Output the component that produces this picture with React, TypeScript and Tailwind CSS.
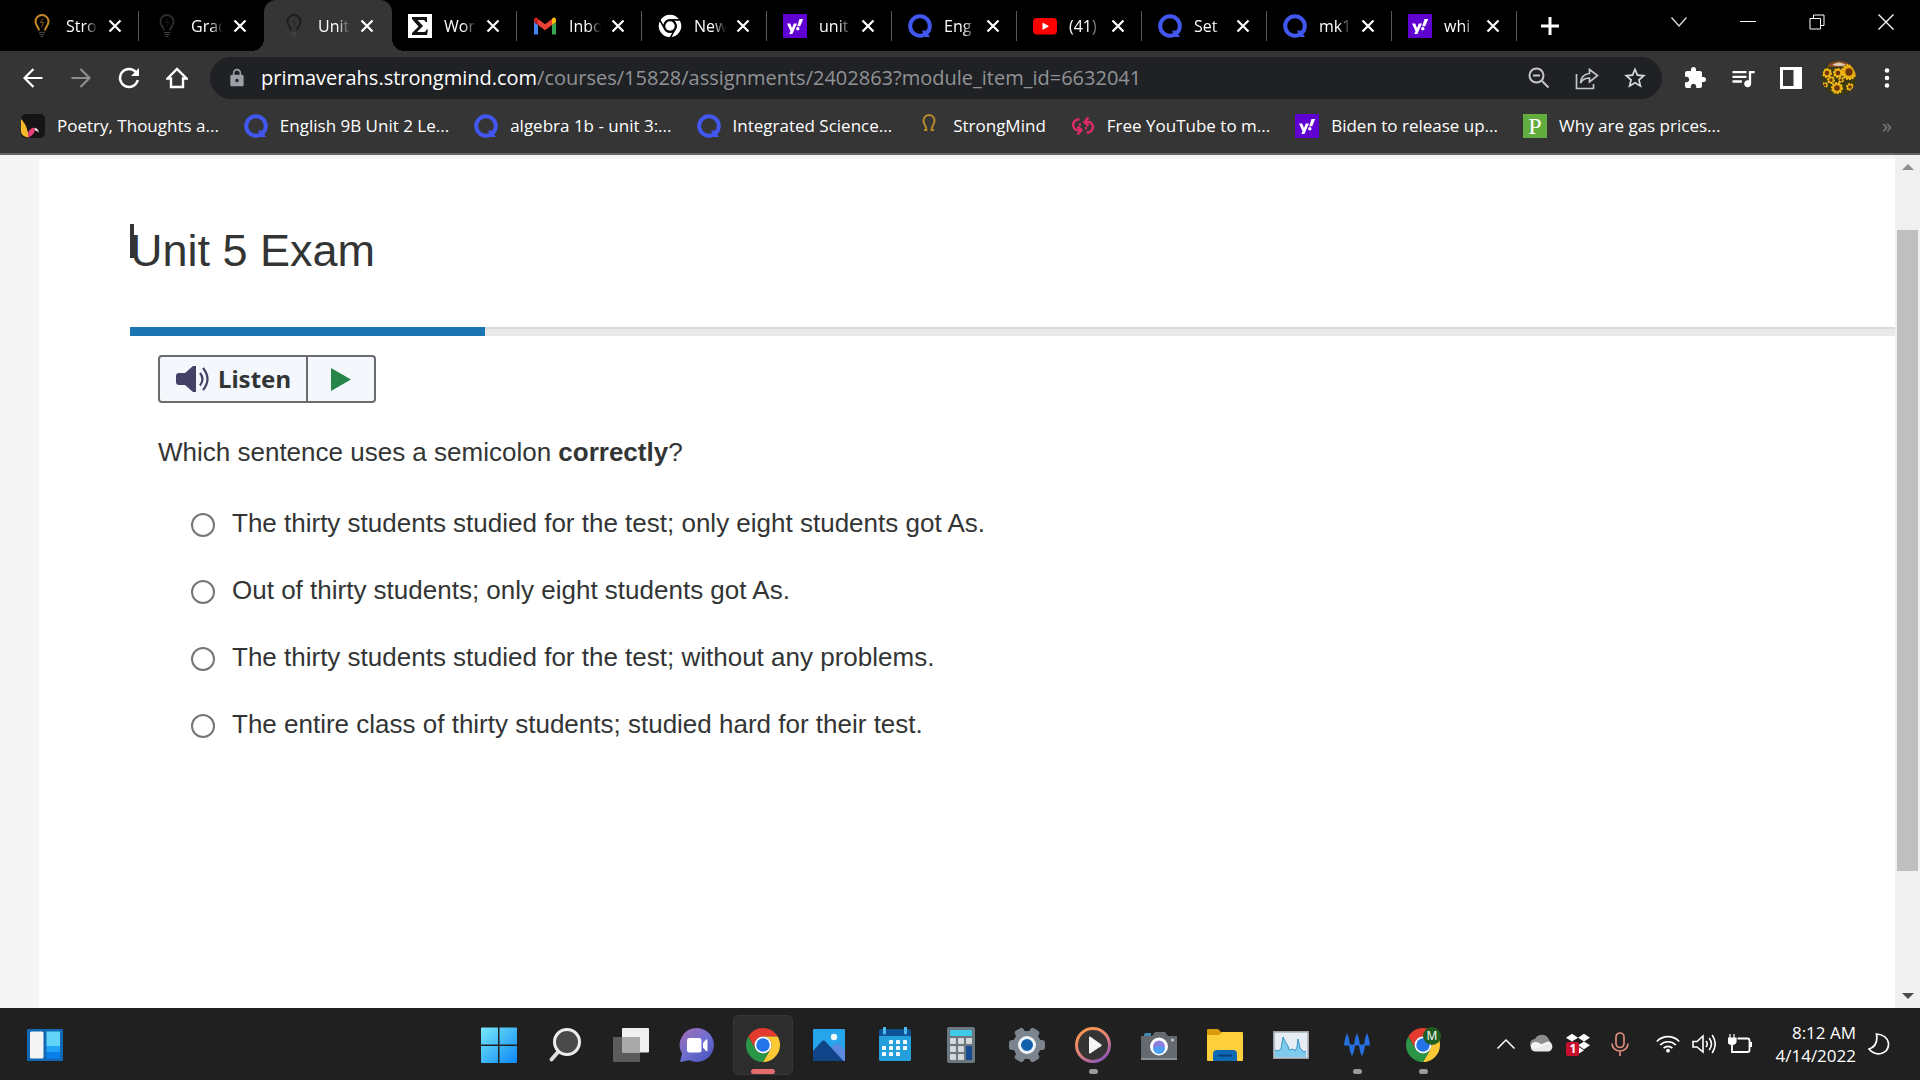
import { useState, type ReactNode } from 'react'
import { FaDropbox } from 'react-icons/fa'
import { MdExtension, MdStarBorder, MdLock, MdQueueMusic } from 'react-icons/md'

type IconProps = { className?: string }

/* ---------- favicons ---------- */

function Bulb({ className = 'text-[#c98a25]' }: IconProps) {
  return (
    <svg viewBox="0 0 24 24" className={`size-6 ${className}`} fill="none" stroke="currentColor">
      <path d="M9 16.5C9 13 5.5 12 5.5 7.5a6.5 6.5 0 0 1 13 0C18.500 12 15 13 15 16.500" strokeWidth="2" />
      <path d="M13 4.500l-2.500 4h3L11.500 13" strokeWidth="1" opacity=".6" />
      <path d="M9 18.500h6M9.500 20.500h5M10.500 22.500h3" stroke="#444" strokeWidth="1.200" />
    </svg>
  )
}

function Horseshoe() {
  return (
    <svg viewBox="0 0 24 24" className="size-6" fill="none" stroke="#b98a2c" strokeWidth="2">
      <path d="M7 16h2.500C9.500 11.500 6.500 11 6.500 6.500a5.500 5.500 0 0 1 11 0c0 4.500-3 5-3 9.500H17" />
    </svg>
  )
}

function Quizlet() {
  return (
    <svg viewBox="0 0 24 24" className="size-6" fill="none" stroke="#4257f0" strokeWidth="4">
      <circle cx="12" cy="12" r="9.800" />
      <path d="M14 16.500h3.500l4.500 6.500h-5z" fill="#4257f0" stroke="none" />
    </svg>
  )
}

function Yahoo() {
  return (
    <svg viewBox="0 0 24 24" className="size-6">
      <rect width="24" height="24" fill="#5f01d1" />
      <path d="M4 9.500h3.200l1.800 4.500 1.800-4.500H14L9.400 20H6.300l1.200-2.800z" fill="#fff" />
      <path d="M16.500 5h3.700l-3 7.200h-3z" fill="#fff" />
      <circle cx="14.800" cy="14.800" r="1.700" fill="#fff" />
    </svg>
  )
}

function Sigma() {
  return (
    <svg viewBox="0 0 24 24" className="size-6">
      <rect width="24" height="24" fill="#fff" />
      <path d="M4 3h15v5h-1.500c-.5-1.500-1-2-3-2H9.500l5.500 6-6 6h6c2 0 3-.5 3.500-2.500H20L19 21H4v-2l6.500-6.500L4 5z" fill="#111" />
    </svg>
  )
}

function Gmail() {
  return (
    <svg viewBox="0 0 24 24" className="size-6">
      <path d="M1 20.500h4V11L1 8z" fill="#4285f4" />
      <path d="M19 20.500h4V8l-4 3z" fill="#34a853" />
      <path d="M19 5v6l4-3V6c0-2.500-2.500-3.500-4-1z" fill="#fbbc04" />
      <path d="M5 11V5l7 5.200L19 5v6l-7 5.200z" fill="#ea4335" />
      <path d="M1 8l4 3V5C3.500 2.500 1 3.500 1 6z" fill="#c5221f" />
    </svg>
  )
}

function YouTube() {
  return (
    <svg viewBox="0 0 24 24" className="size-6">
      <rect y="4" width="24" height="16.500" rx="4" fill="#f00" />
      <path d="M9.500 8.500v7.500l6.500-3.700z" fill="#fff" />
    </svg>
  )
}

function ChromeLogo({ className = 'size-6', mono = false }: IconProps & { mono?: boolean }) {
  const line = mono ? '#000' : 'none'
  return (
    <svg viewBox="0 0 48 48" className={className} stroke={line} strokeWidth={mono ? 3 : 0}>
      <path d="M24 12H44.780a24 24 0 0 0-41.560 0L13.610 30A12 12 0 0 1 24 12Z" fill={mono ? '#fff' : '#e33b2e'} />
      <path d="M34.390 30 24 48A24 24 0 0 0 44.780 12H24A12 12 0 0 1 34.390 30Z" fill={mono ? '#fff' : '#fcc934'} />
      <path d="M13.610 30 3.220 12A24 24 0 0 0 24 48L34.390 30a12 12 0 0 1-20.780 0Z" fill={mono ? '#fff' : '#2a9447'} />
      <circle cx="24" cy="24" r="12" fill={mono ? '#000' : '#fff'} />
      <circle cx="24" cy="24" r="9.500" fill={mono ? '#fff' : '#2374e8'} stroke="none" />
    </svg>
  )
}

function Poetry() {
  return (
    <svg viewBox="0 0 24 24" className="size-6">
      <rect width="24" height="24" rx="5" fill="#171417" />
      <path d="M0 5c4 4 7 10 7.500 18.500C3 23 0 20.500 0 17z" fill="#f8b928" />
      <path d="M7.500 23.500C6 19 8 14 13.500 13.500c1.500 3-1 8-6 10z" fill="#e8407a" />
      <path d="M13.500 14c2.500-.5 4 2 4.500 5-1-1.500-2-2-3.500-2.200z" fill="#eee" />
    </svg>
  )
}

function Mp3Loop() {
  return (
    <svg viewBox="0 0 24 24" className="size-6" fill="none" stroke="#dc2b68" strokeWidth="2.500">
      <path d="M8.500 5.500A5.500 5.500 0 0 0 5.500 16H10" />
      <path d="M6.500 20.500l4-4.500-4-3.500M15.500 18.500a5.500 5.500 0 0 0 3-10.500H14M17.500 12L13.500 8l4-4.500" />
      <path d="M8 10.500h2M14 14h2" />
    </svg>
  )
}

function PbsP() {
  return (
    <span className="flex size-6 items-center justify-center bg-[#62ad3e] font-['Liberation_Serif',serif] text-2xl leading-6 text-white">
      P
    </span>
  )
}

/* ---------- taskbar icons ---------- */

function Widgets() {
  return (
    <svg viewBox="0 0 36 36" className="size-9">
      <rect y="2" width="36" height="32" rx="1" fill="#1268b3" />
      <rect x="3" y="4.500" width="13.500" height="27" rx="1.500" fill="#f4f4f4" />
      <path d="M19.500 4.500H33V19H19.500z" fill="#62d4fa" />
      <path d="M19.500 19H33v6H19.500z" fill="#20a4f3" />
      <path d="M19.500 25H33v6.500H19.500z" fill="#0a80ea" />
    </svg>
  )
}

function Start() {
  return (
    <svg viewBox="0 0 36 36" className="size-9">
      <defs>
        <linearGradient id="start" x1="0" y1="0" x2="36" y2="36" gradientUnits="userSpaceOnUse">
          <stop stopColor="#79eafb" />
          <stop offset="1" stopColor="#0a87f5" />
        </linearGradient>
      </defs>
      <path d="M0 1.500Q0 .5 1 .5h16v17H0zM18.500.5H35q1 0 1 1v16H18.500zM0 19h17v17H1q-1 0-1-1zM18.500 19H36v16q0 1-1 1H18.500z" fill="url(#start)" />
    </svg>
  )
}

function Search() {
  return (
    <svg viewBox="0 0 36 36" className="size-9">
      <path d="M11 25 4.500 32.500" stroke="#dcdcdc" strokeWidth="4" strokeLinecap="round" />
      <circle cx="20" cy="15" r="12.500" fill="#4a4a4a" stroke="#eee" strokeWidth="3" />
    </svg>
  )
}

function TaskView() {
  return (
    <svg viewBox="0 0 36 36" className="size-9">
      <rect y="10" width="27" height="25" rx="1" fill="#5b5b5b" />
      <rect x="9" y="1" width="27" height="24.500" rx="1" fill="#f0f0f0" />
      <rect x="9" y="10" width="18" height="15.500" fill="#a9a9a9" />
    </svg>
  )
}

function Chat() {
  return (
    <svg viewBox="0 0 36 36" className="size-9">
      <defs>
        <linearGradient id="chat" x1="5" y1="4" x2="30" y2="34" gradientUnits="userSpaceOnUse">
          <stop stopColor="#9c6cba" />
          <stop offset=".5" stopColor="#6d6fd0" />
          <stop offset="1" stopColor="#4b53bc" />
        </linearGradient>
      </defs>
      <path d="M18 1a17 17 0 1 1-7.500 32.300L1 35l2-8.500A17 17 0 0 1 18 1z" fill="url(#chat)" />
      <rect x="8" y="11" width="14.500" height="14.500" rx="2.500" fill="#fff" />
      <path d="M24 16l3-3.500h1.500v11.500H27l-3-3.500z" fill="#fff" />
    </svg>
  )
}

function Photos() {
  return (
    <svg viewBox="0 0 36 36" className="size-9">
      <rect x="2" y="2" width="32" height="32" rx="1" fill="#27a5ea" />
      <path d="M18 23l6.500-6q1.500-1 3 0l6.500 6v11H18z" fill="#5b8ae0" />
      <path d="M2 24l9-10q1.500-1.500 3 0l18.500 20H2z" fill="#104488" />
      <circle cx="23" cy="10" r="3.200" fill="#f0fafa" />
    </svg>
  )
}

function Calendar() {
  const dots = [[12, 13], [19, 13], [26, 13], [5, 19], [12, 19], [19, 19], [26, 19], [5, 25], [12, 25], [19, 25]]
  return (
    <svg viewBox="0 0 36 36" className="size-9">
      <rect x="2" y="8" width="32" height="26" rx="1.500" fill="#259fdc" />
      <path d="M2 4q0-2 2-2h28q2 0 2 2v5H2z" fill="#0e5296" />
      <path d="M7.500 1v5M28.500 1v5" stroke="#50bdf0" strokeWidth="3" strokeLinecap="round" />
      {dots.map(([x, y]) => (
        <rect key={`${x}-${y}`} x={x} y={y} width="4" height="4" rx=".5" fill="#f2faff" />
      ))}
    </svg>
  )
}

function Calculator() {
  const keys = [[7, 12], [15, 12], [23, 12], [7, 20], [15, 20], [7, 28], [15, 28]]
  return (
    <svg viewBox="0 0 36 36" className="size-9">
      <rect x="4" width="28" height="36" rx="2" fill="#6d7780" />
      <rect x="7" y="3" width="22" height="6" rx="1" fill="#3fc9e8" />
      {keys.map(([x, y]) => (
        <rect key={`${x}-${y}`} x={x} y={y - 1} width="6" height="6" rx="1" fill="#d4d8da" />
      ))}
      <rect x="23" y="19" width="6" height="14" rx="1" fill="#154c91" />
    </svg>
  )
}

function Gear() {
  return (
    <svg viewBox="0 0 36 36" className="size-9">
      <g fill="#7c858d">
        <circle cx="18" cy="18" r="14" />
        {[0, 60, 120].map(a => (
          <rect key={a} x="0" y="13" width="36" height="10" rx="3" transform={`rotate(${a} 18 18)`} />
        ))}
      </g>
      <circle cx="18" cy="18" r="7.500" fill="#1560ad" stroke="#edf5fa" strokeWidth="3" />
    </svg>
  )
}

function MediaPlayer() {
  return (
    <svg viewBox="0 0 36 36" className="size-9">
      <defs>
        <linearGradient id="media" x1="8" y1="2" x2="28" y2="34" gradientUnits="userSpaceOnUse">
          <stop stopColor="#f8944a" />
          <stop offset=".5" stopColor="#e58279" />
          <stop offset="1" stopColor="#8a55b5" />
        </linearGradient>
      </defs>
      <circle cx="18" cy="18" r="16.500" fill="#343434" stroke="url(#media)" strokeWidth="3" />
      <path d="M14 10.500v15q0 1.500 1.500.7l10.500-7q1.200-1 0-2l-10.500-7.400Q14 9.200 14 10.500z" fill="#f4f4f4" />
    </svg>
  )
}

function Camera() {
  return (
    <svg viewBox="0 0 36 36" className="size-9">
      <path d="M3 8q0-2 2-2h5v4H3z" fill="#3f8ab0" />
      <path d="M0 9h11l3-4h10l3 4h9v24H0z" fill="#646a70" />
      <path d="M0 31h36v2H0z" fill="#8a8f94" />
      <circle cx="31.500" cy="13" r="1.500" fill="#c8ccce" />
      <circle cx="18" cy="19.500" r="7.500" fill="#8f80e0" stroke="#fff" strokeWidth="3" />
      <path d="M12 21a6 6 0 0 0 12 0q-6-4-12 0z" fill="#4d9df0" />
    </svg>
  )
}

function Explorer() {
  return (
    <svg viewBox="0 0 36 36" className="size-9">
      <path d="M0 3q0-1 1-1h10l4 4-3 4H0z" fill="#d99a0b" />
      <path d="M0 8h12l3-3h20q1 0 1 1v27q0 1-1 1H1q-1 0-1-1z" fill="#fdd03b" />
      <path d="M6 34V27q0-4 4-4h16q4 0 4 4v7z" fill="#0e69b5" />
      <path d="M11 28.500h14" stroke="#073f78" strokeWidth="2" />
    </svg>
  )
}

function Monitor() {
  return (
    <svg viewBox="0 0 36 36" className="size-9">
      <rect x=".8" y="4.800" width="34.400" height="26.400" fill="#e6edf3" stroke="#9aa3ab" strokeWidth="1.600" />
      <path d="M2 23l3 1 3-2 2-12 3 6 2 3 1 4 4-1 2 2 2-4 1-8 2 9 4 4 2-1v6H2z" fill="#7fcbee" />
      <path d="M2 23l3 1 3-2 2-12 3 6 2 3 1 4 4-1 2 2 2-4 1-8 2 9 4 4 2-1" fill="none" stroke="#3a93c8" />
    </svg>
  )
}

function Wave() {
  return (
    <svg viewBox="0 0 36 36" className="size-9" fill="#256fe0">
      <path d="M5 18.500Q6 10 8 6q2 4 3 12.500zM15 18.500Q16 10 18 6q2 4 3 12.500zM25 18.500Q26 10 28 6q2 4 3 12.500z" />
      <path d="M10 17.500h6Q15.500 25 13 29q-2.500-4-3-11.500zM20 17.500h6Q25.500 25 23 29q-2.500-4-3-11.500z" />
    </svg>
  )
}

/* ---------- data ---------- */

const tabs: { label: string; icon: ReactNode; active?: boolean; divider?: boolean }[] = [
  { label: 'Stro', icon: <Bulb />, divider: true },
  { label: 'Grad', icon: <Bulb className="text-[#2c2c2c]" /> },
  { label: 'Unit', icon: <Bulb className="text-[#1d1d1d]" />, active: true },
  { label: 'Wor', icon: <Sigma />, divider: true },
  { label: 'Inbo', icon: <Gmail />, divider: true },
  { label: 'New', icon: <ChromeLogo mono />, divider: true },
  { label: 'unit', icon: <Yahoo />, divider: true },
  { label: 'Eng', icon: <Quizlet />, divider: true },
  { label: '(41)', icon: <YouTube />, divider: true },
  { label: 'Set', icon: <Quizlet />, divider: true },
  { label: 'mk1', icon: <Quizlet />, divider: true },
  { label: 'whi', icon: <Yahoo />, divider: true },
]

const bookmarks = [
  { label: 'Poetry, Thoughts a...', icon: <Poetry /> },
  { label: 'English 9B Unit 2 Le...', icon: <Quizlet /> },
  { label: 'algebra 1b - unit 3:...', icon: <Quizlet /> },
  { label: 'Integrated Science...', icon: <Quizlet /> },
  { label: 'StrongMind', icon: <Horseshoe /> },
  { label: 'Free YouTube to m...', icon: <Mp3Loop /> },
  { label: 'Biden to release up...', icon: <Yahoo /> },
  { label: 'Why are gas prices...', icon: <PbsP /> },
]

const answers = [
  'The thirty students studied for the test; only eight students got As.',
  'Out of thirty students; only eight students got As.',
  'The thirty students studied for the test; without any problems.',
  'The entire class of thirty students; studied hard for their test.',
]

const apps: { name: string; icon: ReactNode; active?: boolean; running?: boolean }[] = [
  { name: 'Start', icon: <Start /> },
  { name: 'Search', icon: <Search /> },
  { name: 'Task View', icon: <TaskView /> },
  { name: 'Chat', icon: <Chat /> },
  { name: 'Chrome', icon: <ChromeLogo className="size-[34px]" />, active: true },
  { name: 'Photos', icon: <Photos /> },
  { name: 'Calendar', icon: <Calendar /> },
  { name: 'Calculator', icon: <Calculator /> },
  { name: 'Settings', icon: <Gear /> },
  { name: 'Media Player', icon: <MediaPlayer />, running: true },
  { name: 'Camera', icon: <Camera /> },
  { name: 'File Explorer', icon: <Explorer /> },
  { name: 'Resource Monitor', icon: <Monitor /> },
  { name: 'Wave', icon: <Wave />, running: true },
  {
    name: 'Chrome profile',
    running: true,
    icon: (
      <span className="relative">
        <ChromeLogo className="size-[34px]" />
        <span className="absolute -top-px -right-px flex size-[18px] items-center justify-center rounded-full bg-[#1f5f22] text-xs text-white">
          M
        </span>
      </span>
    ),
  },
]

/* ---------- browser chrome ---------- */

function IconButton({ label, children }: { label: string; children: ReactNode }) {
  return (
    <button aria-label={label} className="flex w-12 shrink-0 items-center justify-center text-white">
      {children}
    </button>
  )
}

function TabStrip() {
  return (
    <div className="flex h-[51px] bg-black pl-3.5 text-white">
      <div className="flex">
        {tabs.map((tab, i) => (
          <div
            key={i}
            className={
              tab.active
                ? 'relative flex w-32 items-center rounded-t-xl bg-[#353535] pl-[18px]'
                : 'relative flex w-[125px] items-center pl-4'
            }
          >
            {tab.icon}
            <span className="ml-3 w-8 whitespace-nowrap text-base [mask-image:linear-gradient(to_right,black_60%,transparent)]">
              {tab.label}
            </span>
            <button aria-label={`Close ${tab.label}`} className="ml-2.5">
              <svg viewBox="0 0 14 14" className="size-3.5" stroke="#fff" strokeWidth="2.200">
                <path d="M1.500 1.500l11 11M12.500 1.500l-11 11" />
              </svg>
            </button>
            {tab.divider && <span className="absolute right-0 h-[30px] w-px bg-[#5a5a5a]" />}
            {tab.active && (
              <>
                <span className="absolute bottom-0 -left-3 size-3 bg-[radial-gradient(circle_at_0_0,black_12px,#353535_12px)]" />
                <span className="absolute bottom-0 -right-3 size-3 bg-[radial-gradient(circle_at_100%_0,black_12px,#353535_12px)]" />
              </>
            )}
          </div>
        ))}
      </div>
      <button aria-label="New tab" className="ml-6 flex items-center">
        <svg viewBox="0 0 18 18" className="size-[18px]" stroke="#fff" strokeWidth="3">
          <path d="M9 0v18M0 9h18" />
        </svg>
      </button>
      <div className="ml-auto flex h-[43px]">
        <button aria-label="Search tabs" className="flex w-[69px] items-center justify-center">
          <svg viewBox="0 0 18 10" className="h-2.5 w-[18px]" fill="none" stroke="#ddd" strokeWidth="1.300">
            <path d="M1.500 .5L9 9l7.500-8.500" />
          </svg>
        </button>
        <button aria-label="Minimize" className="flex w-[69px] items-center justify-center">
          <span className="h-px w-4 bg-white" />
        </button>
        <button aria-label="Restore" className="flex w-[69px] items-center justify-center">
          <svg viewBox="0 0 16 16" className="size-4" fill="none" stroke="#fff">
            <path d="M1 4.500h10.500V15H1zM4.500 4V1H15v10.500h-3" />
          </svg>
        </button>
        <button aria-label="Close window" className="flex w-[69px] items-center justify-center">
          <svg viewBox="0 0 16 16" className="size-4" stroke="#fff" strokeWidth="1.300">
            <path d="M.5.5l15 15M15.500.5l-15 15" />
          </svg>
        </button>
      </div>
    </div>
  )
}

function Toolbar() {
  return (
    <div className="flex h-[54px] items-stretch bg-[#353535] pr-[9px] pl-[9px]">
      <IconButton label="Back">
        <svg viewBox="0 0 20 20" className="size-5" fill="none" stroke="#fff" strokeWidth="2.200">
          <path d="M19.500 10H1.500M10.500 1L1.500 10l9 9" />
        </svg>
      </IconButton>
      <IconButton label="Forward">
        <svg viewBox="0 0 20 20" className="size-5" fill="none" stroke="#8d8d8d" strokeWidth="2.200">
          <path d="M.5 10h18M9.500 1l9 9-9 9" />
        </svg>
      </IconButton>
      <IconButton label="Reload">
        <svg viewBox="0 0 22 22" className="size-[22px]" fill="none" stroke="#fff" strokeWidth="2.500">
          <path d="M18 5.200A9 9 0 1 0 19.800 13" />
          <path d="M21 1v8h-8z" fill="#fff" stroke="none" />
        </svg>
      </IconButton>
      <IconButton label="Home">
        <svg viewBox="0 0 22 22" className="size-[22px]" fill="none" stroke="#fff" strokeWidth="2.400">
          <path d="M1.500 11.500L11 2l9.500 9.500h-3.500V20H5v-8.500z" />
        </svg>
      </IconButton>
      <div className="my-1.5 ml-[9px] flex flex-1 items-center rounded-full bg-[#202124] pr-[3px] pl-[17px]">
        <MdLock className="size-5 text-[#9aa0a6]" />
        <div
          role="textbox"
          aria-label="Address"
          contentEditable
          suppressContentEditableWarning
          className="ml-3.5 flex-1 whitespace-nowrap text-xl text-[#909397] outline-none"
        >
          <span className="text-white">primaverahs.strongmind.com</span>/courses/15828/assignments/2402863?module_item_id=6632041
        </div>
        <IconButton label="Zoom out">
          <svg viewBox="0 0 22 22" className="size-[22px]" fill="none" stroke="#c3c5c8" strokeWidth="2">
            <circle cx="8.500" cy="8.500" r="7" />
            <path d="M5 8.500h7M14 14l6.500 6.500" />
          </svg>
        </IconButton>
        <IconButton label="Share">
          <svg viewBox="0 0 24 24" className="size-6" fill="none" stroke="#c3c5c8" strokeWidth="1.700">
            <path d="M1.500 8v14.500h17V18M14.500 3.500L22.500 9.500l-8 6.500v-4c-4.500 0-7 1.500-9 5 .5-5 3.500-9 9-9.500z" />
          </svg>
        </IconButton>
        <IconButton label="Bookmark this tab">
          <MdStarBorder className="size-[26px] text-[#d5d7da]" />
        </IconButton>
      </div>
      <span className="w-[9px]" />
      <IconButton label="Extensions">
        <MdExtension className="size-6" />
      </IconButton>
      <IconButton label="Media control">
        <MdQueueMusic className="size-7" />
      </IconButton>
      <IconButton label="Side panel">
        <svg viewBox="0 0 22 22" className="size-[22px]">
          <path d="M0 0h22v22H0zM3 3v16h10.500V3z" fill="#fff" fillRule="evenodd" />
        </svg>
      </IconButton>
      <IconButton label="Profile">
        <svg viewBox="0 0 34 34" className="size-[34px]">
          <clipPath id="avatar">
            <circle cx="17" cy="17" r="17" />
          </clipPath>
          <g clipPath="url(#avatar)">
            <rect width="34" height="34" fill="#3b3a12" />
            <path d="M6 0h22v6H6z" fill="#8a4c1f" />
            {[[27, 11, 8], [15, 27, 6], [9, 19, 4], [5, 12, 5], [16, 12, 5], [19, 19, 3], [3, 24, 3], [28, 26, 4]].map(([x, y, r]) => (
              <g key={`${x}-${y}`}>
                <circle cx={x} cy={y} r={r - 1} fill="#e8a912" stroke="#f0bc1c" strokeWidth="2" strokeDasharray="2 1" />
                <circle cx={x} cy={y} r={r / 2.2} fill="#6d3508" />
              </g>
            ))}
            <path d="M10 4q7-5 14 0-7 2-14 0z" fill="#d9cdb8" />
          </g>
        </svg>
      </IconButton>
      <IconButton label="Menu">
        <svg viewBox="0 0 6 22" className="h-[22px] w-1.5" fill="#fff">
          <circle cx="3" cy="3.500" r="2.300" />
          <circle cx="3" cy="11" r="2.300" />
          <circle cx="3" cy="18.500" r="2.300" />
        </svg>
      </IconButton>
    </div>
  )
}

function BookmarksBar() {
  return (
    <nav className="flex h-[50px] items-center gap-[25px] border-b-2 border-[#636363] bg-[#353535] pr-7 pb-1.5 pl-[21px] text-[17px] text-white">
      {bookmarks.map(b => (
        <a key={b.label} href="#" className="flex items-center gap-3 whitespace-nowrap">
          {b.icon}
          {b.label}
        </a>
      ))}
      <button className="ml-auto text-xl text-[#7d7d7d]">»</button>
    </nav>
  )
}

/* ---------- exam page ---------- */

function Exam() {
  const [choice, setChoice] = useState<number | null>(null)

  return (
    <section className="flex-1 bg-white font-['Liberation_Sans',Arial,sans-serif] text-[#333535]">
      <header className="flex h-[168px] items-center pt-3.5 pl-[91px]">
        <h1 className="relative text-[45px] leading-none">
          Unit 5 Exam
          <span className="absolute -top-1 left-0 h-[34px] w-1 bg-[#333535]" />
        </h1>
      </header>
      <div className="ml-[91px] h-[9px] border-t-2 border-[#dadada] bg-[#e9e9e9]">
        <div className="-mt-0.5 h-[9px] w-[20.1%] bg-[#1b75b1]" />
      </div>

      <div className="pl-[119px] text-[26px] leading-8">
        <div className="mt-[19px] inline-flex h-12 rounded border-2 border-[#6a6c70] bg-[#f4f8fc] align-top font-['Noto_Sans',sans-serif]">
          <button className="flex w-[148px] items-center border-r-2 border-[#6a6c70] pl-4 text-2xl font-bold">
            <svg viewBox="0 0 34 26" className="mr-2 h-[26px] w-[34px]" fill="none" stroke="#444166" strokeWidth="2.200">
              <path d="M0 10q0-3 3-3h6l8-7h3v26h-3l-8-7H3q-3 0-3-3z" fill="#444166" stroke="none" />
              <path d="M24 7q5 6 0 12.500M27 2q9 11 0 22" />
            </svg>
            Listen
          </button>
          <button aria-label="Play" className="flex w-[66px] items-center justify-center">
            <svg viewBox="0 0 20 23" className="h-[23px] w-5">
              <path d="M0 0l20 11.500L0 23z" fill="#28854a" />
            </svg>
          </button>
        </div>

        <fieldset className="mt-[33px]">
          <legend>
            Which sentence uses a semicolon <b>correctly</b>?
          </legend>
          <div className="pt-[21px] pl-[33px]">
            {answers.map((text, i) => (
              <label key={text} className="flex h-[67px] items-center gap-[17px]">
                <input
                  type="radio"
                  name="answer"
                  checked={choice === i}
                  onChange={() => setChoice(i)}
                  className="mt-1 size-6 appearance-none rounded-full border-2 border-[#767676] bg-white checked:border-8"
                />
                {text}
              </label>
            ))}
          </div>
        </fieldset>
      </div>
    </section>
  )
}

function Scrollbar() {
  return (
    <div className="flex w-[25px] flex-col items-center bg-[#f0f0f0] py-[9px]">
      <svg viewBox="0 0 12 6" className="h-1.5 w-3">
        <path d="M0 6l6-6 6 6z" fill="#8f8f8f" />
      </svg>
      <div className="flex w-full flex-1 flex-col px-0.5 pt-[60px]">
        <div className="h-[84%] w-full bg-[#bfbfbf]" />
      </div>
      <svg viewBox="0 0 12 6" className="h-1.5 w-3">
        <path d="M0 0l6 6 6-6z" fill="#4b4b4b" />
      </svg>
    </div>
  )
}

/* ---------- taskbar ---------- */

function Taskbar() {
  return (
    <footer className="grid h-[72px] grid-cols-[1fr_auto_1fr] bg-[#202020] pt-0.5 text-white">
      <button aria-label="Widgets" className="flex w-[90px] items-center justify-center">
        <Widgets />
      </button>
      <div className="flex pl-0.5">
        {apps.map(app => (
          <button key={app.name} aria-label={app.name} className="relative flex w-[66px] items-center justify-center">
            <span
              className={
                app.active
                  ? 'flex size-[60px] items-center justify-center rounded-md border border-[#383838] bg-[#2d2d2d]'
                  : 'flex'
              }
            >
              {app.icon}
            </span>
            {app.active && <span className="absolute bottom-1.5 h-[5px] w-6 rounded-full bg-[#e46c6c]" />}
            {app.running && <span className="absolute bottom-1.5 h-[5px] w-[9px] rounded-full bg-[#9b9b9b]" />}
          </button>
        ))}
      </div>
      <div className="flex items-center justify-end gap-3 pr-[30px] pb-0.5">
        <svg viewBox="0 0 18 10" className="mr-[3px] h-2.5 w-[18px]" fill="none" stroke="#fff" strokeWidth="1.500">
          <path d="M.5 9.500L9 1l8.500 8.500" />
        </svg>
        <svg viewBox="0 0 24 24" className="size-6">
          <path d="M5 17a5 5 0 0 1 0-10 7.500 7.500 0 0 1 13-1l3 5z" fill="#8d8d8d" />
          <path d="M5 19.500a4.800 4.800 0 0 1-1-9.300c3-.5 5 .5 7 2l7-2.700a5.200 5.200 0 0 1 1 10z" fill="#fff" opacity=".9" />
        </svg>
        <span className="relative mr-[9px]">
          <FaDropbox className="size-6" />
          <span className="absolute top-2.5 left-0 flex h-3.5 w-[13px] items-center justify-center rounded-xs bg-[#c8102e] text-xs font-bold">
            1
          </span>
        </span>
        <svg viewBox="0 0 18 24" className="mr-[15px] h-6 w-[18px]" fill="none" stroke="#dd8b7c" strokeWidth="1.700">
          <rect x="5" y="1" width="8" height="14.500" rx="4" />
          <path d="M1 11.500a8 7.500 0 0 0 16 0M9 19v5" />
        </svg>
        <svg viewBox="0 0 24 18" className="h-[18px] w-6" fill="none" stroke="#fff" strokeWidth="1.700">
          <path d="M.8 6.500a15.500 15.500 0 0 1 22.400 0M4.200 10a11 11 0 0 1 15.600 0M7.600 13.200a6.300 6.300 0 0 1 8.800 0" />
          <circle cx="12" cy="15.700" r="1.900" fill="#fff" stroke="none" />
        </svg>
        <svg viewBox="0 0 24 20" className="h-5 w-6" fill="none" stroke="#fff" strokeWidth="1.600">
          <path d="M1 7.500v5.500h4l6 5V2L5 7.500zM14 7q2.500 3 0 6M17.200 4q4.500 6 0 12M20.200 1q6 9 0 18" />
        </svg>
        <svg viewBox="0 0 24 20" className="h-5 w-6" fill="none" stroke="#fff" strokeWidth="1.800">
          <path d="M4 10v8h15.500q2 0 2-2V6.500q0-2-2-2H9.500" />
          <path d="M0 4h8v3.500q0 2.500-4 3-4-.5-4-3zM2 0v4M6 0v4M22 8.500h2v4h-2z" fill="#fff" strokeWidth="1.200" />
        </svg>
        <time className="ml-[11px] text-right text-[17px] leading-[23px] whitespace-nowrap">
          8:12 AM
          <br />
          4/14/2022
        </time>
        <svg viewBox="0 0 22 22" className="size-[22px]" fill="none" stroke="#fff" strokeWidth="1.700">
          <path d="M8.500 1q2 12-7.500 15 5 6 12 4.500 8-2.500 7.500-10.500Q19 2 8.500 1z" />
        </svg>
      </div>
    </footer>
  )
}

export default function App() {
  return (
    <div className="flex h-screen flex-col overflow-hidden font-['Open_Sans','Noto_Sans',sans-serif]">
      <TabStrip />
      <Toolbar />
      <BookmarksBar />
      <main className="flex min-h-0 flex-1 bg-[#f5f5f5]">
        <div className="flex flex-1 pt-1 pl-[39px]">
          <Exam />
        </div>
        <Scrollbar />
      </main>
      <Taskbar />
    </div>
  )
}
